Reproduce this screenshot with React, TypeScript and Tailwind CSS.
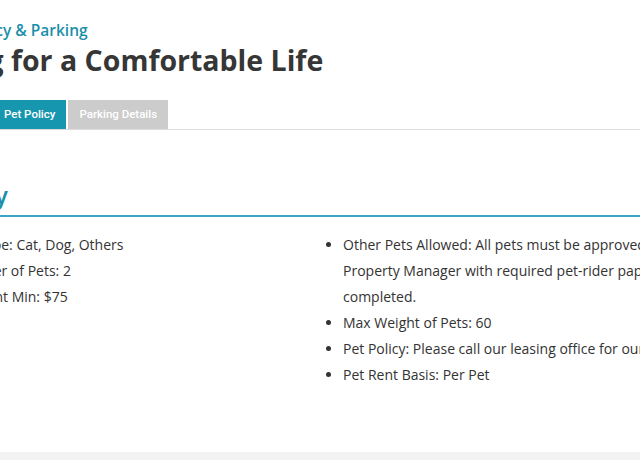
import React from "react";

const left = ["Pet Type: Cat, Dog, Others", "Number of Pets: 2", "Pet Rent Min: $75"];
const right = [
  "Other Pets Allowed: All pets must be approved by the Property Manager with required pet-rider paperwork completed.",
  "Max Weight of Pets: 60",
  "Pet Policy: Please call our leasing office for our pet policy.",
  "Pet Rent Basis: Per Pet",
];

export default function App() {
  return (
    <div className="w-[640px] h-[460px] overflow-hidden bg-white flex flex-col" style={{ fontFamily: '"Open Sans", sans-serif' }}>
      <div className="flex-1 overflow-hidden">
        <div className="ml-[-64px] w-[820px] pt-[20px]">
          <div className="ml-[3px] text-[15.5px] font-semibold text-[#1b8fa9] leading-[20px]">Pet Policy &amp; Parking</div>
          <h1 className="mt-[2px] ml-[-17px] text-[28.5px] font-bold text-[#363636] leading-[36px]">Living for a Comfortable Life</h1>
          <div className="mt-[22px] ml-[56px] flex border-b border-[#dcdcdc]" style={{ fontFamily: 'Roboto, sans-serif' }}>
            <div className="h-[29px] pl-[12px] pr-[11px] flex items-center bg-[#1796af] text-white text-[11.5px] font-medium">Pet Policy</div>
            <div className="h-[29px] ml-[2px] px-[11px] flex items-center bg-[#cccccc] text-white text-[11.5px] font-medium">Parking Details</div>
          </div>
          <h2 className="mt-[50px] ml-[-40px] text-[24px] font-semibold text-[#1b8fa9] leading-[30px]">Pet Policy</h2>
          <div className="mt-[5px] h-[2px] bg-[#3aa6c2]" />
          <div className="mt-[15px] grid grid-cols-[400px_1fr] text-[14px] text-[#333] leading-[26px]">
            <ul className="list-disc pl-[12px] ml-[5px]">
              {left.map((t) => (
                <li key={t}>{t}</li>
              ))}
            </ul>
            <ul className="list-disc pl-[12px] ml-[-5px] w-[402px]">
              {right.map((t) => (
                <li key={t}>{t}</li>
              ))}
            </ul>
          </div>
        </div>
      </div>
      <div className="h-[8px] bg-[#f2f2f2]" />
    </div>
  );
}
